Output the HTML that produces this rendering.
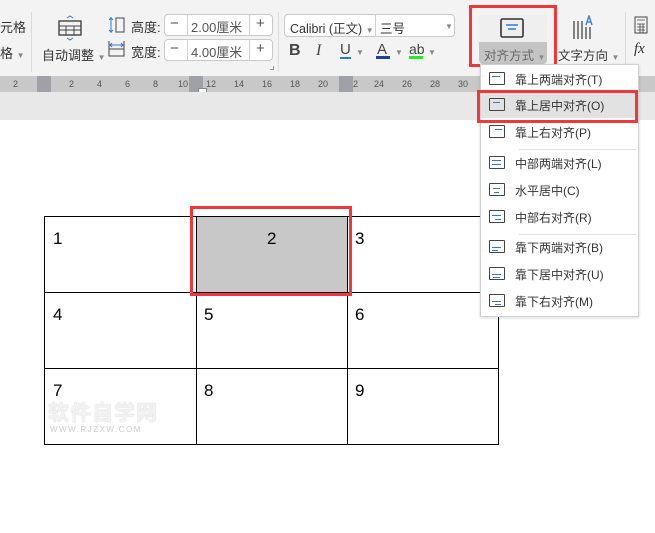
<!DOCTYPE html><html><head><meta charset="utf-8"><style>
*{margin:0;padding:0;box-sizing:border-box}
body{width:655px;height:533px;overflow:hidden;position:relative;background:#fff;font-family:"Liberation Sans","Noto Sans CJK SC",sans-serif;font-size:12px;color:#333}
.a{position:absolute;white-space:nowrap}
.tb{left:0;top:0;width:655px;height:76px;background:#f3f3f3}
.sep{position:absolute;width:1px;background:#dcdcdc}
.box{position:absolute;border:1px solid #c9c9c9;border-radius:4px;background:#fff}
.car{color:#888;font-size:8px}
.ruler{left:0;top:76px;width:655px;height:16px;background:#c8c8c8;font-size:9px;color:#555}
.gr{left:0;top:92px;width:655px;height:28px;background:#e8e8e8}
.cell{position:absolute;border:1px solid #000;font-family:"Liberation Sans",sans-serif;font-size:17px;color:#000}
.menu{left:480px;top:64px;width:159px;height:253px;background:#fff;border:1px solid #d0d0d0;box-shadow:0 1px 3px rgba(0,0,0,.15)}
.it{position:absolute;left:0;width:157px;height:26px;font-size:12px;color:#333}
.it span{position:absolute;left:34px;top:5px}
.ic{position:absolute;left:8px;top:6px;width:16px;height:13px;border:1.2px solid #444;border-radius:1px}
.ic i{position:absolute;height:1.3px;background:#2a7ad8}
.red{position:absolute;border:3px solid #f0383a}
</style></head><body>
<div class="a tb"></div>
<div class="a" style="left:0;top:17px;font-size:13px">元格</div>
<div class="a" style="left:0;top:43px;font-size:13px">格 <span class="car">▼</span></div>
<div class="sep" style="left:31px;top:12px;height:60px"></div>
<svg class="a" style="left:57px;top:15px" width="26" height="26"><rect x="2" y="6" width="22" height="14" fill="none" stroke="#444" stroke-width="1.4"/><path d="M2 11H24M2 15H24M9 11V20M17 11V20" stroke="#444" stroke-width="1"/><path d="M10 3l3-2 3 2M10 23l3 2 3-2" stroke="#2a7ad8" fill="none"/></svg>
<div class="a" style="left:42px;top:45px;font-size:13px">自动调整 <span class="car">▼</span></div>
<svg class="a" style="left:108px;top:16px" width="18" height="18"><path d="M3 1V17M3 2l-2 2M3 2l2 2M3 16l-2-2M3 16l2-2" stroke="#2a7ad8" fill="none"/><rect x="8" y="2" width="8" height="14" fill="none" stroke="#444"/></svg>
<svg class="a" style="left:108px;top:40px" width="18" height="18"><path d="M1 5H16M2 5l2-2M2 5l2 2M15 5l-2-2M15 5l-2 2" stroke="#2a7ad8" fill="none"/><rect x="1" y="9" width="15" height="7" fill="none" stroke="#444"/><path d="M1 1V9M16 1V9" stroke="#444"/></svg>
<div class="a" style="left:131px;top:17px;font-size:13px">高度:</div>
<div class="a" style="left:131px;top:42px;font-size:13px">宽度:</div>
<div class="box" style="left:164px;top:14px;width:109px;height:22px"></div>
<div class="box" style="left:164px;top:39px;width:109px;height:22px"></div>
<div class="a" style="left:187px;top:14px;width:1px;height:22px;background:#d0d0d0"></div>
<div class="a" style="left:249px;top:14px;width:1px;height:22px;background:#d0d0d0"></div>
<div class="a" style="left:187px;top:39px;width:1px;height:22px;background:#d0d0d0"></div>
<div class="a" style="left:249px;top:39px;width:1px;height:22px;background:#d0d0d0"></div>
<div class="a" style="left:170px;top:15px;font-size:15px;color:#555">−</div>
<div class="a" style="left:170px;top:40px;font-size:15px;color:#555">−</div>
<div class="a" style="left:256px;top:15px;font-size:15px;color:#555">+</div>
<div class="a" style="left:256px;top:40px;font-size:15px;color:#555">+</div>
<div class="a" style="left:191px;top:17px;font-size:13px;color:#555">2.00厘米</div>
<div class="a" style="left:191px;top:42px;font-size:13px;color:#555">4.00厘米</div>
<div class="sep" style="left:278px;top:12px;height:60px"></div>
<div class="box" style="left:284px;top:14px;width:171px;height:23px"></div>
<div class="a" style="left:375px;top:14px;width:1px;height:23px;background:#d0d0d0"></div>
<div class="a" style="left:290px;top:18px;font-size:12.5px">Calibri (正文) <span class="car">▼</span></div>
<div class="a" style="left:380px;top:18px;font-size:12.5px">三号</div>
<div class="a car" style="left:445px;top:22px">▼</div>
<div class="a" style="left:289px;top:42px;font-size:16px;font-weight:bold;color:#444">B</div>
<div class="a" style="left:316px;top:42px;font-size:16px;font-style:italic;font-family:'Liberation Serif',serif;color:#444">I</div>
<div class="a" style="left:340px;top:41px;font-size:15px;color:#444">U</div><div class="a" style="left:340px;top:57px;width:11px;height:2px;background:#2a7ad8"></div><div class="a car" style="left:356px;top:48px">▼</div>
<div class="a" style="left:377px;top:41px;font-size:15px;color:#444">A</div><div class="a" style="left:376px;top:56px;width:14px;height:3px;background:#1e3fa0"></div><div class="a car" style="left:395px;top:48px">▼</div>
<div class="a" style="left:409px;top:41px;font-size:14px;color:#444">ab</div><div class="a" style="left:409px;top:56px;width:14px;height:3px;background:#22ee22"></div><div class="a car" style="left:428px;top:48px">▼</div>
<div class="a" style="left:479px;top:15px;width:68px;height:49px;background:#c4c4c4;border-radius:4px"></div>
<div class="a" style="left:479px;top:15px;width:68px;height:27px;background:#efefef;border-radius:4px 4px 0 0"></div>
<svg class="a" style="left:500px;top:18px" width="24" height="20"><rect x="1" y="1" width="22" height="18" rx="1.5" fill="none" stroke="#333" stroke-width="1.6"/><path d="M6 7H18M8 11H16" stroke="#2a7ad8" stroke-width="1.5"/></svg>
<div class="a" style="left:484px;top:45px;font-size:12.5px;color:#666">对齐方式 <span class="car">▼</span></div>
<div class="red" style="left:469px;top:5px;width:88px;height:62px"></div>
<svg class="a" style="left:572px;top:15px" width="24" height="26"><path d="M2 6V24M6 6V24M10 6V24M14 12V24M18 12V24" stroke="#444" stroke-width="1.3"/><path d="M14 10l3-9 3 9M15 7H19" stroke="#2a7ad8" fill="none" stroke-width="1.3"/></svg>
<div class="a" style="left:558px;top:45px;font-size:12.5px">文字方向 <span class="car">▼</span></div>
<div class="sep" style="left:625px;top:12px;height:60px"></div>
<svg class="a" style="left:634px;top:16px" width="14" height="18"><rect x="1" y="1" width="12" height="16" fill="none" stroke="#444"/><path d="M3 4H11M3 8H11M3 11H11M3 14H11M6 8V17M9 8V17" stroke="#444" stroke-width=".8"/></svg>
<div class="a" style="left:634px;top:41px;font-size:15px;font-style:italic;font-family:'Liberation Serif',serif">fx</div>
<div class="a" style="left:270px;top:66px;width:4px;height:4px;border-right:1px solid #999;border-bottom:1px solid #999"></div>
<div class="a ruler"></div>
<div class="a" style="left:37px;top:76px;width:14px;height:16px;background:#a0a0a8"></div>
<div class="a" style="left:189px;top:76px;width:14px;height:16px;background:#a0a0a8"></div>
<div class="a" style="left:339px;top:76px;width:14px;height:16px;background:#a0a0a8"></div>
<div class="a" style="left:13px;top:79px;font-size:9px;color:#555">2</div>
<div class="a" style="left:69px;top:79px;font-size:9px;color:#555">2</div>
<div class="a" style="left:97px;top:79px;font-size:9px;color:#555">4</div>
<div class="a" style="left:125px;top:79px;font-size:9px;color:#555">6</div>
<div class="a" style="left:153px;top:79px;font-size:9px;color:#555">8</div>
<div class="a" style="left:178px;top:79px;font-size:9px;color:#555">10</div>
<div class="a" style="left:206px;top:79px;font-size:9px;color:#555">12</div>
<div class="a" style="left:234px;top:79px;font-size:9px;color:#555">14</div>
<div class="a" style="left:262px;top:79px;font-size:9px;color:#555">16</div>
<div class="a" style="left:290px;top:79px;font-size:9px;color:#555">18</div>
<div class="a" style="left:318px;top:79px;font-size:9px;color:#555">20</div>
<div class="a" style="left:353px;top:79px;font-size:9px;color:#555">2</div>
<div class="a" style="left:374px;top:79px;font-size:9px;color:#555">24</div>
<div class="a" style="left:402px;top:79px;font-size:9px;color:#555">26</div>
<div class="a" style="left:430px;top:79px;font-size:9px;color:#555">28</div>
<div class="a" style="left:458px;top:79px;font-size:9px;color:#555">30</div>
<div class="a" style="left:198px;top:88px;width:9px;height:9px;background:#fff;border:1px solid #888"></div>
<div class="a gr"></div>
<div class="cell" style="left:44px;top:216px;width:153px;height:77px"><span class="a" style="left:8px;top:12px">1</span></div>
<div class="cell" style="left:196px;top:216px;width:152px;height:77px;background:#c8c8c8"><span class="a" style="left:70px;top:12px">2</span></div>
<div class="cell" style="left:347px;top:216px;width:152px;height:77px"><span class="a" style="left:7px;top:12px">3</span></div>
<div class="cell" style="left:44px;top:292px;width:153px;height:77px"><span class="a" style="left:8px;top:12px">4</span></div>
<div class="cell" style="left:196px;top:292px;width:152px;height:77px"><span class="a" style="left:7px;top:12px">5</span></div>
<div class="cell" style="left:347px;top:292px;width:152px;height:77px"><span class="a" style="left:7px;top:12px">6</span></div>
<div class="cell" style="left:44px;top:368px;width:153px;height:77px"><span class="a" style="left:8px;top:12px">7</span></div>
<div class="cell" style="left:196px;top:368px;width:152px;height:77px"><span class="a" style="left:7px;top:12px">8</span></div>
<div class="cell" style="left:347px;top:368px;width:152px;height:77px"><span class="a" style="left:7px;top:12px">9</span></div>
<div class="a" style="left:48px;top:397px;font-size:21px;font-weight:bold;color:#f2f2f2;letter-spacing:1px;text-shadow:0 0 1px #bbb">软件自学网</div>
<div class="a" style="left:50px;top:425px;font-size:8px;color:#ccc;letter-spacing:1.5px">WWW.RJZXW.COM</div>
<div class="red" style="left:190px;top:206px;width:162px;height:90px"></div>
<div class="a menu">
<div class="it" style="top:1px"><div class="ic"><i style="left:2px;top:3px;width:8px"></i></div><span>靠上两端对齐(T)</span></div>
<div class="it" style="top:27px;background:#e2e2e2"><div class="ic"><i style="left:3px;top:3px;width:7px"></i></div><span>靠上居中对齐(O)</span></div>
<div class="it" style="top:54px"><div class="ic"><i style="left:5px;top:3px;width:7px"></i></div><span>靠上右对齐(P)</span></div>
<div class="a" style="left:38px;top:84px;width:117px;height:1px;background:#e3e3e3"></div>
<div class="it" style="top:85px"><div class="ic"><i style="left:2px;top:3px;width:9px"></i><i style="left:2px;top:7px;width:9px"></i></div><span>中部两端对齐(L)</span></div>
<div class="it" style="top:112px"><div class="ic"><i style="left:3px;top:4px;width:7px"></i><i style="left:4px;top:8px;width:5px"></i></div><span>水平居中(C)</span></div>
<div class="it" style="top:139px"><div class="ic"><i style="left:2px;top:4px;width:9px"></i><i style="left:5px;top:8px;width:6px"></i></div><span>中部右对齐(R)</span></div>
<div class="a" style="left:38px;top:169px;width:117px;height:1px;background:#e3e3e3"></div>
<div class="it" style="top:169px"><div class="ic"><i style="left:2px;top:6px;width:9px"></i><i style="left:2px;top:9px;width:6px"></i></div><span>靠下两端对齐(B)</span></div>
<div class="it" style="top:196px"><div class="ic"><i style="left:2px;top:6px;width:9px"></i><i style="left:3px;top:9px;width:7px"></i></div><span>靠下居中对齐(U)</span></div>
<div class="it" style="top:223px"><div class="ic"><i style="left:2px;top:6px;width:9px"></i><i style="left:5px;top:9px;width:6px"></i></div><span>靠下右对齐(M)</span></div>
</div>
<div class="red" style="left:477px;top:90px;width:161px;height:33px"></div>
</body></html>
